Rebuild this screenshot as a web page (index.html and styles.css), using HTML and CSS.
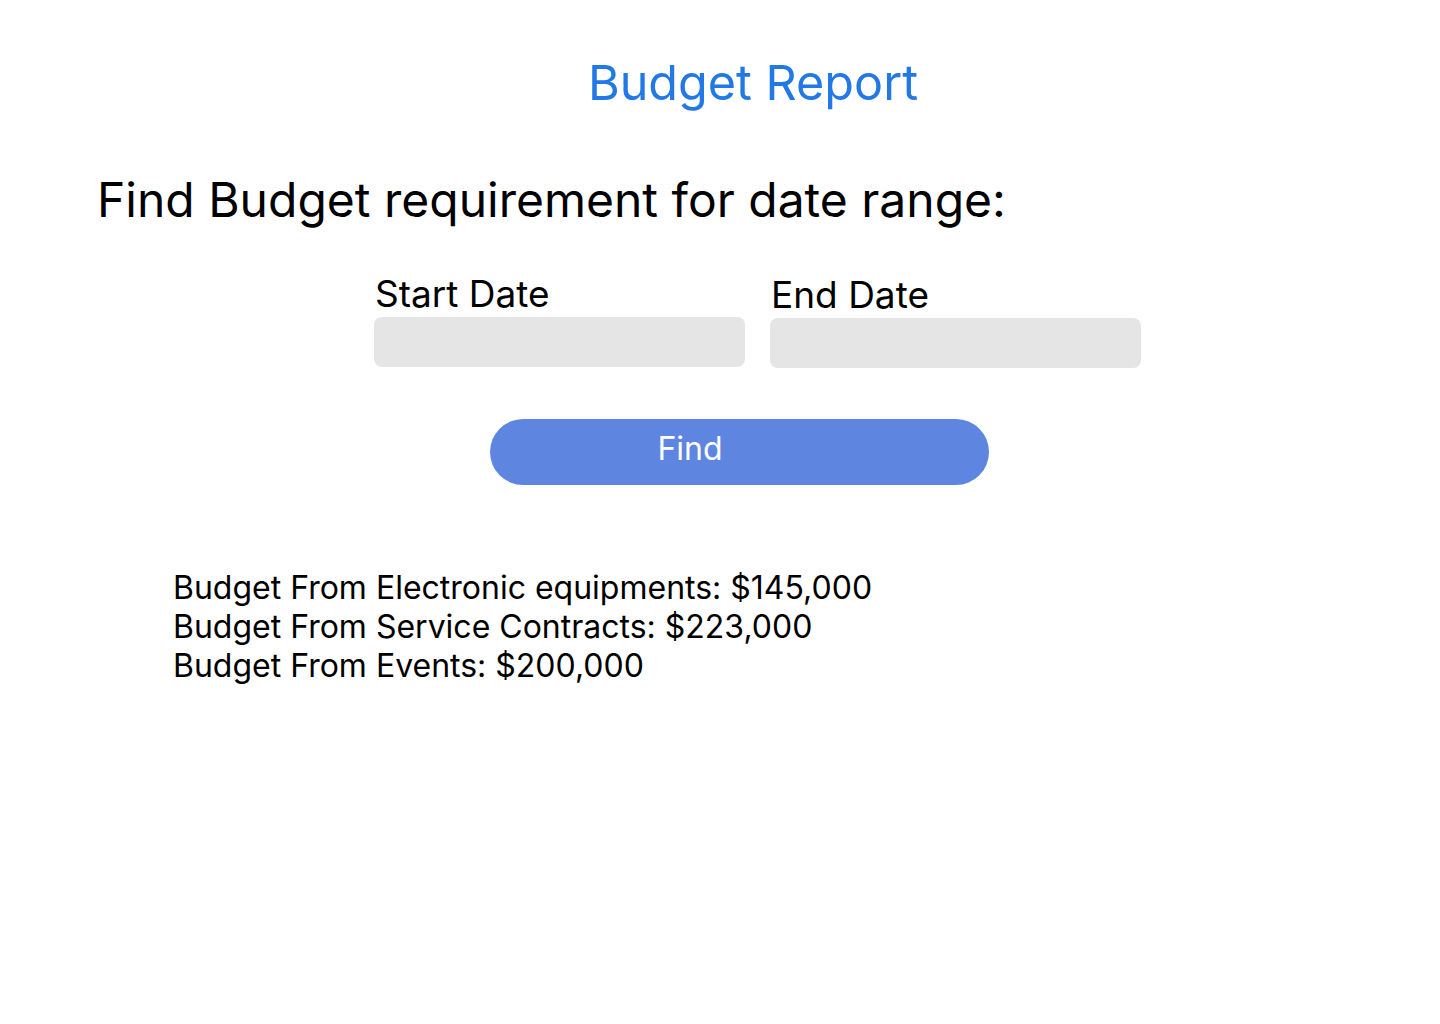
FILE: index.html
```html
<!DOCTYPE html>
<html lang="en">
<head>
<meta charset="utf-8">
<title>Budget Report</title>
<link rel="stylesheet" href="styles.css">
</head>
<body>
<main class="page">
  <h1 class="title">Budget Report</h1>
  <h2 class="heading">Find Budget requirement for date range:</h2>
  <form class="range">
    <div class="field">
      <label class="label" for="start">Start Date</label>
      <input class="input" id="start" type="text">
    </div>
    <div class="field field-end">
      <label class="label" for="end">End Date</label>
      <input class="input" id="end" type="text">
    </div>
  </form>
  <div class="actions">
    <button class="find" type="button">Find</button>
  </div>
  <ul class="results">
    <li>Budget From Electronic equipments: $145,000</li>
    <li>Budget From Service Contracts: $223,000</li>
    <li>Budget From Events: $200,000</li>
  </ul>
</main>
</body>
</html>
```
FILE: styles.css
```css
* { box-sizing: border-box; }
html, body {
  margin: 0;
  padding: 0;
  background: #ffffff;
}
body {
  font-family: Inter, "Noto Sans", sans-serif;
  color: #000000;
  width: 1440px;
  height: 1024px;
}
.page {
  display: flex;
  flex-direction: column;
}
.title {
  margin: 54px 0 0;
  padding-left: 66px;
  text-align: center;
  font-size: 48.5px;
  font-weight: 400;
  line-height: 58px;
  color: #2279e6;
}
.heading {
  margin: 59px 0 0 97px;
  font-size: 48px;
  font-weight: 400;
  line-height: 58px;
}
.range {
  margin: 43px 0 0 374px;
  display: flex;
  gap: 25px;
}
.field {
  display: flex;
  flex-direction: column;
  gap: 1px;
  width: 371px;
}
.field-end { padding-top: 1px; }
.label {
  font-size: 37px;
  line-height: 44px;
  padding-left: 1px;
}
.input {
  margin: 0;
  height: 50px;
  border: none;
  border-radius: 8px;
  background: #e5e5e5;
  font: inherit;
}
.actions {
  margin: 51px 0 0 490px;
}
.find {
  width: 499px;
  height: 66px;
  border: none;
  border-radius: 33px;
  background: #5e86e1;
  color: #ffffff;
  font-family: Inter, "Noto Sans", sans-serif;
  font-size: 32px;
  line-height: 39px;
  padding: 0 99px 7px 0;
  text-align: center;
}
.results {
  list-style: none;
  margin: 83px 0 0 173px;
  padding: 0;
  font-size: 32px;
  line-height: 39px;
}
```
